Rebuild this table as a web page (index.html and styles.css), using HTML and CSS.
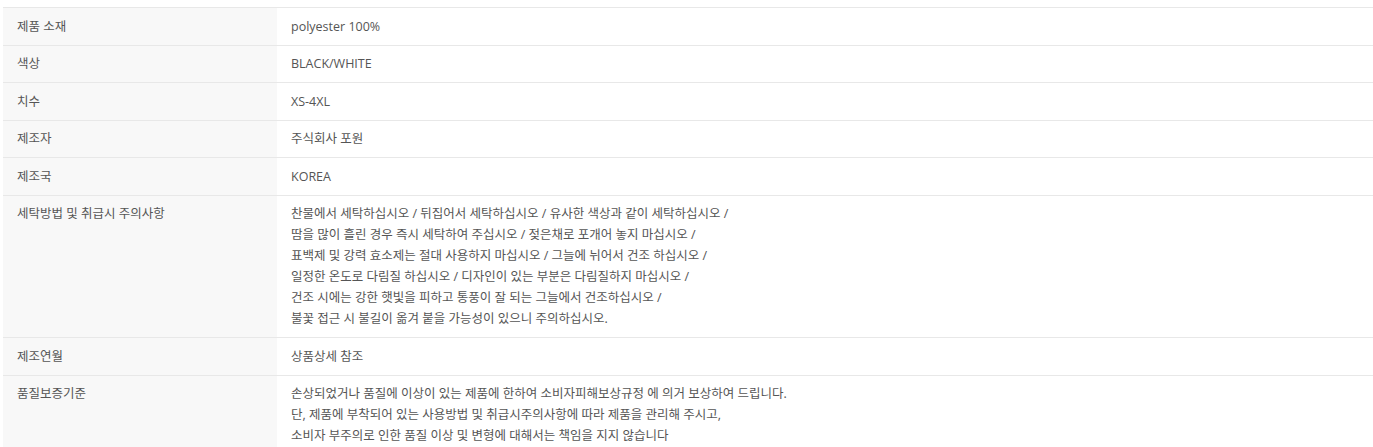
FILE: index.html
```html
<!DOCTYPE html>
<html lang="ko">
<head>
<meta charset="utf-8">
<link rel="stylesheet" href="styles.css">
</head>
<body>
<div class="wrap">
<table class="info">
<tbody>
<tr><th>제품 소재</th><td>polyester 100%</td></tr>
<tr><th>색상</th><td>BLACK/WHITE</td></tr>
<tr><th>치수</th><td>XS-4XL</td></tr>
<tr><th>제조자</th><td>주식회사 포원</td></tr>
<tr><th>제조국</th><td>KOREA</td></tr>
<tr><th>세탁방법 및 취급시 주의사항</th><td>찬물에서 세탁하십시오 / 뒤집어서 세탁하십시오 / 유사한 색상과 같이 세탁하십시오 /<br>땀을 많이 흘린 경우 즉시 세탁하여 주십시오 / 젖은채로 포개어 놓지 마십시오 /<br>표백제 및 강력 효소제는 절대 사용하지 마십시오 / 그늘에 뉘어서 건조 하십시오 /<br>일정한 온도로 다림질 하십시오 / 디자인이 있는 부분은 다림질하지 마십시오 /<br>건조 시에는 강한 햇빛을 피하고 통풍이 잘 되는 그늘에서 건조하십시오 /<br>불꽃 접근 시 불길이 옮겨 붙을 가능성이 있으니 주의하십시오.</td></tr>
<tr><th>제조연월</th><td>상품상세 참조</td></tr>
<tr><th>품질보증기준</th><td>손상되었거나 품질에 이상이 있는 제품에 한하여 소비자피해보상규정 에 의거 보상하여 드립니다.<br>단, 제품에 부착되어 있는 사용방법 및 취급시주의사항에 따라 제품을 관리해 주시고,<br>소비자 부주의로 인한 품질 이상 및 변형에 대해서는 책임을 지지 않습니다</td></tr>
</tbody>
</table>
</div>
</body>
</html>
```
FILE: styles.css
```css
html, body {
  margin: 0;
  padding: 0;
  background: #fff;
}
.wrap {
  padding: 7px 0 0 3px;
}
.info {
  width: 100%;
  border-collapse: collapse;
  border-top: 1px solid #e8e8e8;
  font-family: "Open Sans", "Noto Sans CJK KR", sans-serif;
  font-size: 12.5px;
  line-height: 21px;
  color: #555;
}
.info th, .info td {
  text-align: left;
  vertical-align: top;
  font-weight: normal;
  padding: 7.75px 14px;
  border-bottom: 1px solid #e8e8e8;
}
.info th {
  width: 246px;
  background: #f8f8f8;
}
.info td {
  background: #fff;
}
```
